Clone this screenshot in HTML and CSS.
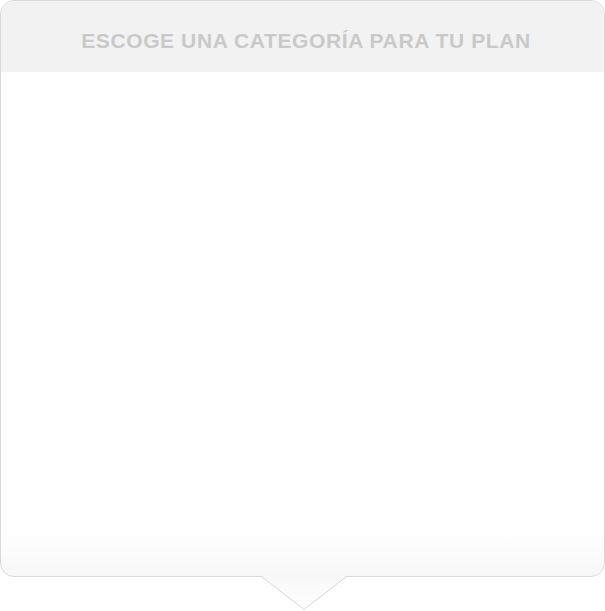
FILE: index.html
```html
<!DOCTYPE html>
<html lang="es">
<head>
<meta charset="utf-8">
<title>Escoge una categoría</title>
<link rel="stylesheet" href="styles.css">
</head>
<body>
<div class="popover">
  <div class="card">
    <div class="card-header">
      <h1 class="card-title">ESCOGE UNA CATEGORÍA PARA TU PLAN</h1>
    </div>
    <div class="card-body"></div>
  </div>
  <svg class="pointer" width="86" height="36" viewBox="0 0 86 36" aria-hidden="true">
    <defs>
      <linearGradient id="pg" x1="0" y1="0" x2="0" y2="1">
        <stop offset="0" stop-color="#f7f7f7"/>
        <stop offset="1" stop-color="#ffffff"/>
      </linearGradient>
    </defs>
    <polygon points="0,0 86,0 43,34" fill="url(#pg)"/>
    <polyline points="0,1 43,34.5 86,1" fill="none" stroke="#d6d6d6" stroke-width="1"/>
  </svg>
</div>
</body>
</html>
```

FILE: styles.css
```css
html, body {
  margin: 0;
  padding: 0;
  background: #ffffff;
}

.popover {
  position: relative;
  width: 605px;
  height: 611px;
}

.card {
  box-sizing: border-box;
  width: 605px;
  height: 577px;
  border: 1px solid #d9d9d9;
  border-radius: 14px;
  overflow: hidden;
  display: flex;
  flex-direction: column;
  background: linear-gradient(to bottom, #ffffff 0%, #ffffff 92%, #f7f7f7 100%);
}

.card-header {
  height: 71px;
  background: #f2f2f2;
  display: flex;
  align-items: center;
  justify-content: center;
  flex: none;
}

.card-title {
  margin: 0;
  padding-top: 9px;
  padding-left: 7px;
  font-family: "Liberation Sans", Arial, sans-serif;
  font-weight: bold;
  font-size: 21px;
  color: #c9c9c9;
  letter-spacing: 0.6px;
}

.card-body {
  flex: 1;
}

.pointer {
  position: absolute;
  left: 261px;
  top: 575px;
  display: block;
}
```
